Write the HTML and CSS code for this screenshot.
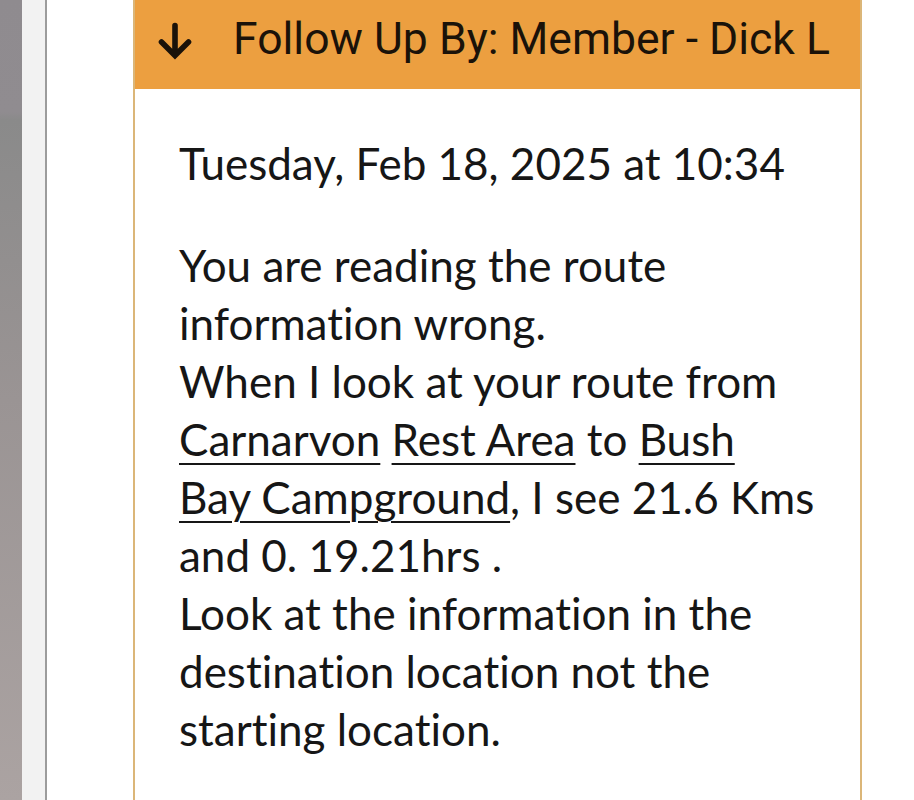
FILE: index.html
```html
<!DOCTYPE html>
<html>
<head>
<meta charset="utf-8">
<link rel="stylesheet" href="styles.css">
</head>
<body>
<div class="page">
  <div class="edge-dark"></div>
  <div class="edge-light"></div>
  <div class="main">
    <div class="card">
      <div class="card-head">
        <svg class="arrow" viewBox="0 0 38 38" width="38" height="38"><path d="M19 3.5V33M5.5 20L19 33.5L32.5 20" fill="none" stroke="#1a1209" stroke-width="5.6" stroke-linecap="round" stroke-linejoin="miter"/></svg>
        <span class="head-text">Follow Up By: Member - Dick L</span>
      </div>
      <div class="card-body">
        <p class="date">Tuesday, Feb 18, 2025 at 10:34</p>
        <p class="msg">You are reading the route information wrong.<br>When I look at your route from <a href="#">Carnarvon</a> <a href="#">Rest Area</a> to <a href="#">Bush Bay Campground</a>, I see 21.6 Kms and 0. 19.21hrs .<br>Look at the information in the destination location not the starting location.</p>
      </div>
    </div>
  </div>
</div>
</body>
</html>
```

FILE: styles.css
```css
html, body {
  margin: 0;
  padding: 0;
  background: #ffffff;
}
.page {
  display: flex;
  height: 800px;
  overflow: hidden;
}
.edge-dark {
  width: 22px;
  flex: none;
  background: linear-gradient(to bottom, #8f8b8f 0%, #908c90 14%, #8a8a8a 15%, #9a9494 50%, #aba3a2 100%);
}
.edge-light {
  width: 23px;
  flex: none;
  background: #f2f2f2;
  border-right: 2px solid #9c9c9c;
}
.main {
  flex: 1;
  padding-left: 86px;
}
.card {
  width: 725px;
  min-height: 820px;
  border-left: 2px solid #dbb678;
  border-right: 2px solid #dbb678;
  background: #fff;
}
.card-head {
  height: 89px;
  background: #ec9f40;
  display: flex;
  align-items: center;
  padding-left: 21px;
  box-sizing: border-box;
}
.arrow {
  width: 38px;
  height: 38px;
  flex: none;
  margin-top: -7px;
}
.head-text {
  font-family: Roboto, "Liberation Sans", sans-serif;
  font-size: 44.5px;
  color: #1a1209;
  margin-left: 39px;
  margin-top: -11px;
  white-space: nowrap;
}
.card-body {
  padding: 45px 44px 0 44px;
  font-family: Lato, "Liberation Sans", sans-serif;
  font-size: 44px;
  line-height: 58px;
  color: #161616;
  font-variant-ligatures: none;
}
.card-body p {
  margin: 0;
}
.date {
  margin-bottom: 44px !important;
}
.msg a {
  color: #161616;
  text-decoration: underline;
  text-decoration-thickness: 2px;
  text-underline-offset: 7px;
}
```
